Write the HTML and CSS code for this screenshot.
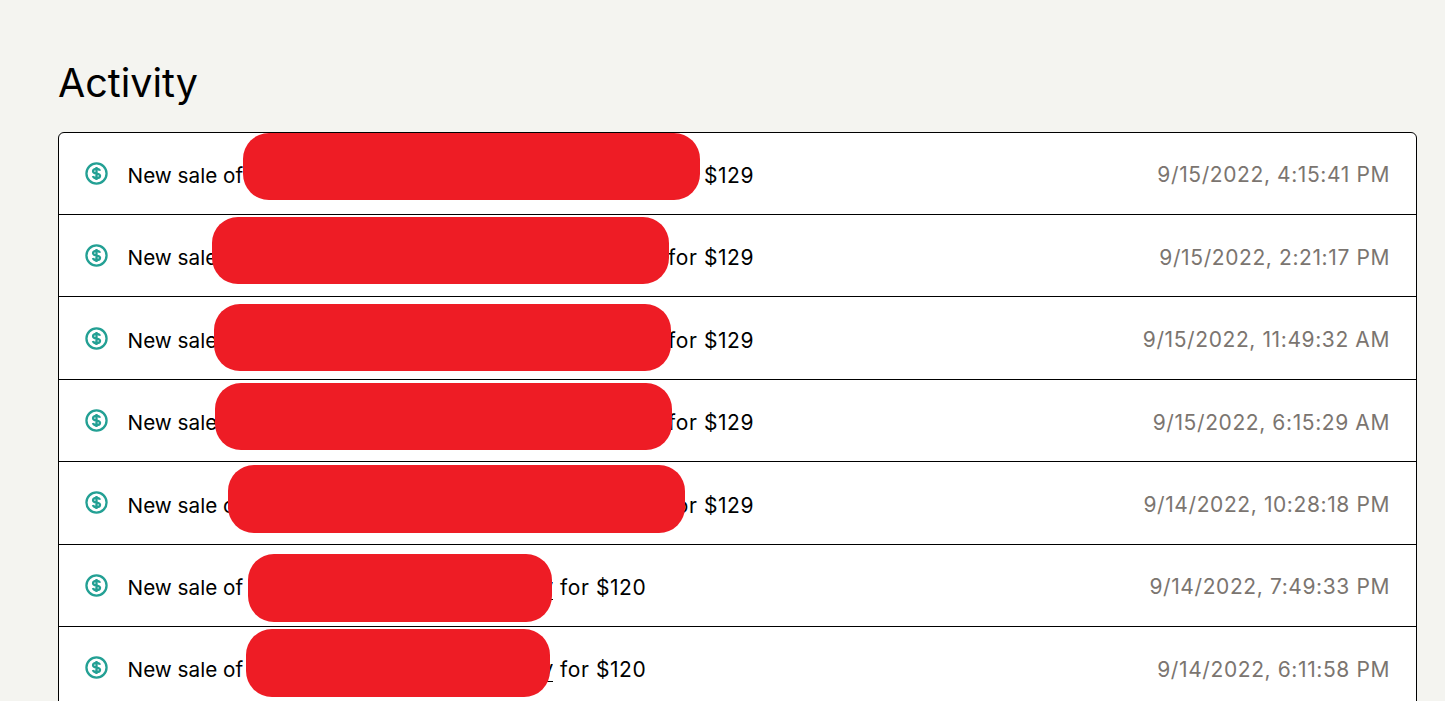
FILE: index.html
```html
<!DOCTYPE html>
<html lang="en">
<head>
<meta charset="utf-8">
<title>Activity</title>
<link rel="stylesheet" href="styles.css">
</head>
<body>
<main class="page">
  <h1 class="title">Activity</h1>
  <div class="list">
    <div class="row"><svg class="icon" viewBox="0 0 24 24"><circle cx="12" cy="12" r="10.5"/><path d="M15.6 9.2c-.3-1.3-1.8-2.1-3.6-2.1-2 0-3.6 1-3.6 2.5 0 3.4 7.3 1.500 7.300 4.800 0 1.500-1.700 2.500-3.700 2.500-1.900 0-3.400-.9-3.700-2.300M12 5.300v13.400"/></svg><span class="msg">New sale of <a class="name long" href="#">Redacted product name</a><span class="price"> for $129</span></span><span class="time">9/15/2022, 4:15:41 PM</span></div>
    <div class="row"><svg class="icon" viewBox="0 0 24 24"><circle cx="12" cy="12" r="10.5"/><path d="M15.6 9.2c-.3-1.3-1.8-2.1-3.6-2.1-2 0-3.6 1-3.6 2.5 0 3.4 7.3 1.500 7.300 4.800 0 1.500-1.700 2.500-3.700 2.500-1.900 0-3.400-.9-3.700-2.300M12 5.300v13.400"/></svg><span class="msg">New sale of <a class="name long" href="#">Redacted product name</a><span class="price"> for $129</span></span><span class="time">9/15/2022, 2:21:17 PM</span></div>
    <div class="row"><svg class="icon" viewBox="0 0 24 24"><circle cx="12" cy="12" r="10.5"/><path d="M15.6 9.2c-.3-1.3-1.8-2.1-3.6-2.1-2 0-3.6 1-3.6 2.5 0 3.4 7.3 1.500 7.300 4.800 0 1.500-1.700 2.500-3.700 2.500-1.900 0-3.400-.9-3.700-2.300M12 5.300v13.400"/></svg><span class="msg">New sale of <a class="name long" href="#">Redacted product name</a><span class="price"> for $129</span></span><span class="time">9/15/2022, 11:49:32 AM</span></div>
    <div class="row"><svg class="icon" viewBox="0 0 24 24"><circle cx="12" cy="12" r="10.5"/><path d="M15.6 9.2c-.3-1.3-1.8-2.1-3.6-2.1-2 0-3.6 1-3.6 2.5 0 3.4 7.3 1.500 7.300 4.800 0 1.500-1.700 2.500-3.700 2.500-1.900 0-3.400-.9-3.700-2.300M12 5.300v13.400"/></svg><span class="msg">New sale of <a class="name long" href="#">Redacted product name</a><span class="price"> for $129</span></span><span class="time">9/15/2022, 6:15:29 AM</span></div>
    <div class="row"><svg class="icon" viewBox="0 0 24 24"><circle cx="12" cy="12" r="10.5"/><path d="M15.6 9.2c-.3-1.3-1.8-2.1-3.6-2.1-2 0-3.6 1-3.6 2.5 0 3.4 7.3 1.500 7.300 4.800 0 1.500-1.700 2.500-3.700 2.500-1.900 0-3.400-.9-3.700-2.300M12 5.300v13.400"/></svg><span class="msg">New sale of <a class="name long" href="#">Redacted product name</a><span class="price"> for $129</span></span><span class="time">9/14/2022, 10:28:18 PM</span></div>
    <div class="row"><svg class="icon" viewBox="0 0 24 24"><circle cx="12" cy="12" r="10.5"/><path d="M15.6 9.2c-.3-1.3-1.8-2.1-3.6-2.1-2 0-3.6 1-3.6 2.5 0 3.4 7.3 1.500 7.300 4.800 0 1.500-1.700 2.500-3.700 2.500-1.900 0-3.400-.9-3.700-2.300M12 5.300v13.400"/></svg><span class="msg">New sale of <a class="name short" href="#">Redacted name y</a><span class="price"> for $120</span></span><span class="time">9/14/2022, 7:49:33 PM</span></div>
    <div class="row"><svg class="icon" viewBox="0 0 24 24"><circle cx="12" cy="12" r="10.5"/><path d="M15.6 9.2c-.3-1.3-1.8-2.1-3.6-2.1-2 0-3.6 1-3.6 2.5 0 3.4 7.3 1.500 7.300 4.800 0 1.500-1.700 2.500-3.700 2.500-1.900 0-3.400-.9-3.700-2.300M12 5.300v13.400"/></svg><span class="msg">New sale of <a class="name short" href="#">Redacted name y</a><span class="price"> for $120</span></span><span class="time">9/14/2022, 6:11:58 PM</span></div>
    <div class="redact r1"></div>
    <div class="redact r2"></div>
    <div class="redact r3"></div>
    <div class="redact r4"></div>
    <div class="redact r5"></div>
    <div class="redact r6"></div>
    <div class="redact r7"></div>
  </div>
</main>
</body>
</html>
```
FILE: styles.css
```css
* { box-sizing: border-box; }
html, body { margin: 0; height: 100%; overflow: hidden; }
body { background: #f4f4f0; color: #000; font-family: "Inter", "Liberation Sans", sans-serif; }
.page { padding: 60px 28px 0 58px; }
.title { margin: 0 0 24.6px; font-size: 39.5px; line-height: 47px; font-weight: 400; }
.list { position: relative; background: #fff; border: 1px solid #000; border-radius: 6px; }
.row { display: flex; align-items: center; height: 82.4px; padding: 3.4px 26px 0; font-size: 20.7px; border-bottom: 1px solid #000; }
.row:last-of-type { border-bottom: 0; }
.icon { flex: none; width: 23px; height: 23px; margin-top: -3.4px; fill: none; stroke: #23a094; stroke-width: 2.4; }
.msg { flex: 1; margin-left: 19.6px; white-space: nowrap; }
.name { display: inline-block; color: #000; text-align: right; overflow: hidden; vertical-align: bottom; border-bottom: 1px solid #000; text-decoration: none; }
.long { width: 412.5px; }
.short { width: 304.5px; }
.price { font-size: 21px; letter-spacing: 0.6px; }
.time { color: #7b7570; font-size: 21px; letter-spacing: 0.6px; }
.redact { position: absolute; width: 457px; height: 67px; background: #ee1c25; border-radius: 26px; }
.r1 { left: 184px; top: 0; }
.r2 { left: 153px; top: 84px; }
.r3 { left: 155px; top: 171px; }
.r4 { left: 156px; top: 250px; }
.r5 { left: 169px; top: 332px; height: 68px; }
.r6 { left: 189px; top: 421px; width: 304px; height: 68px; }
.r7 { left: 187px; top: 496px; width: 304px; height: 68px; }
```
